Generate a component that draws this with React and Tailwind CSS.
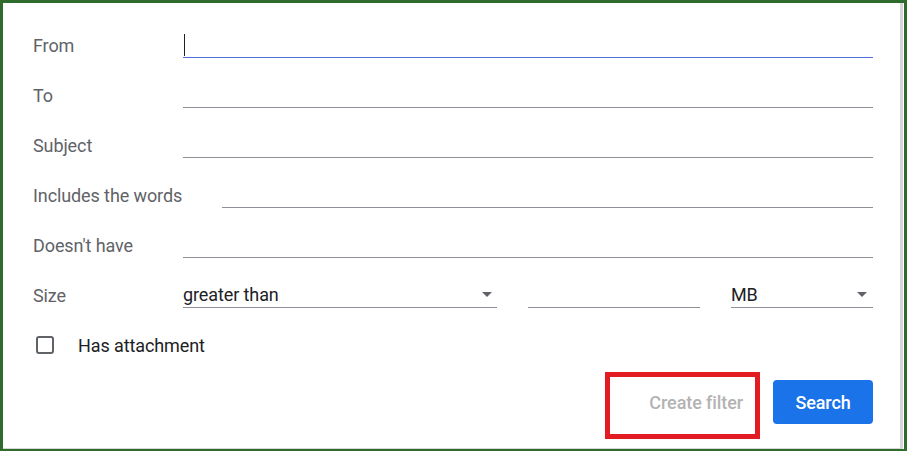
import React from 'react';

const Caret = () => (
    <svg width="10" height="5" viewBox="0 0 10 5" className="shrink-0">
        <path d="M0 0h10L5 5z" fill="#5f6368" />
    </svg>
);

const TextRow = ({ label, focused }) => (
    <div className="flex items-center h-[50px]">
        <div className="min-w-[150px] pr-10 shrink-0 text-[#5f6368]">{label}</div>
        <div
            className={`relative flex-1 h-[26px] border-b ${focused ? 'border-[#4f6fd8]' : 'border-[#8d9096]'}`}
        >
            {focused && <span className="absolute left-[1px] top-[2px] w-px h-[22px] bg-[#202124]" />}
        </div>
    </div>
);

export default function App() {
    return (
        <div
            className="w-[907px] h-[451px] bg-white border-[#2f6b2c] border-t-[3px] border-l-[3px] border-r-[3px] border-b-[2px] text-[18px] tracking-[-0.1px]"
            style={{ fontFamily: 'Roboto, "Liberation Sans", sans-serif' }}
        >
            <div className="h-full mr-px border-r-[3px] border-b border-[#d6d6d6] pl-[30px] pr-[27px] pt-[17px]">
                <TextRow label="From" focused />
                <TextRow label="To" />
                <TextRow label="Subject" />
                <TextRow label="Includes the words" />
                <TextRow label="Doesn't have" />

                {/* Size */}
                <div className="flex items-center h-[50px]">
                    <div className="w-[150px] shrink-0 text-[#5f6368]">Size</div>
                    <div className="w-[314px] h-[26px] flex items-center justify-between pr-[5px] border-b border-[#8d9096] text-[#202124]">
                        <span>greater than</span>
                        <Caret />
                    </div>
                    <div className="w-[172px] h-[26px] ml-[31px] border-b border-[#8d9096]" />
                    <div className="flex-1 h-[26px] ml-[31px] flex items-center justify-between pr-[6px] border-b border-[#8d9096] text-[#202124]">
                        <span>MB</span>
                        <Caret />
                    </div>
                </div>

                {/* Has attachment */}
                <div className="flex items-center h-[50px]">
                    <span className="ml-[3px] w-[18px] h-[18px] rounded-[3px] border-2 border-[#5f6368]" />
                    <span className="ml-[24px] text-[#202124]">Has attachment</span>
                </div>

                {/* Buttons */}
                <div className="flex justify-end items-center mt-[10px] gap-[14px]">
                    <div className="relative">
                        <button className="h-[44px] px-4 text-[#b3b3b3] font-medium">Create filter</button>
                        <span className="absolute -left-[28px] -top-[8px] w-[155px] h-[67px] border-[5px] border-[#e31b23] pointer-events-none" />
                    </div>
                    <button className="w-[100px] h-[44px] rounded-[4px] bg-[#1a73e8] text-white font-medium">Search</button>
                </div>
            </div>
        </div>
    );
}
